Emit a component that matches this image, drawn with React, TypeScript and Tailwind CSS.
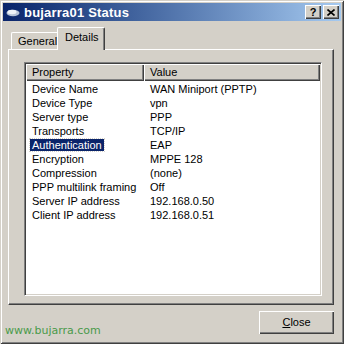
import React from "react";

const rows: [string, string][] = [
  ["Device Name", "WAN Miniport (PPTP)"],
  ["Device Type", "vpn"],
  ["Server type", "PPP"],
  ["Transports", "TCP/IP"],
  ["Authentication", "EAP"],
  ["Encryption", "MPPE 128"],
  ["Compression", "(none)"],
  ["PPP multilink framing", "Off"],
  ["Server IP address", "192.168.0.50"],
  ["Client IP address", "192.168.0.51"],
];

const raised =
  "bg-[#d4d0c8] shadow-[inset_1px_1px_0_#ffffff,inset_-1px_-1px_0_#404040,inset_-2px_-2px_0_#808080]";

export default function App() {
  return (
    <div
      className="w-[344px] h-[344px] bg-[#d4d0c8] p-[3px] flex flex-col shadow-[inset_1px_1px_0_#d4d0c8,inset_-1px_-1px_0_#404040,inset_2px_2px_0_#ffffff,inset_-2px_-2px_0_#808080] text-black"
      style={{ fontFamily: '"Liberation Sans", Arial, sans-serif' }}
    >
      {/* Title bar */}
      <div className="h-[18px] flex items-center bg-gradient-to-r from-[#0a246a] to-[#a6caf0] pl-[2px] pr-[2px]">
        <svg width="16" height="12" viewBox="0 0 16 12" className="shrink-0">
          <ellipse cx="8" cy="7" rx="6.5" ry="3.2" fill="#b8c4d8" />
          <ellipse cx="7" cy="6" rx="4.5" ry="2.2" fill="#eef2f8" />
        </svg>
        <span className="ml-[3px] text-white font-bold text-[13px] leading-none tracking-[0.2px]">
          bujarra01 Status
        </span>
        <div className="ml-auto flex gap-[2px]">
          <div
            className={`${raised} w-[16px] h-[14px] flex items-center justify-center text-[11px] font-bold leading-none`}
          >
            ?
          </div>
          <div
            className={`${raised} w-[16px] h-[14px] flex items-center justify-center`}
          >
            <svg width="8" height="7" viewBox="0 0 8 7">
              <path d="M0.5 0.5 L7.5 6.5 M7.5 0.5 L0.5 6.5" stroke="#000" strokeWidth="1.6" />
            </svg>
          </div>
        </div>
      </div>

      <div className="px-[5px] flex flex-col">
        {/* Tabs */}
        <div className="mt-[6px] h-[22px] flex items-end pl-[3px] relative z-10">
          <div className="h-[17px] w-[47px] border-l border-t border-white rounded-tl-[2px] shadow-[inset_-1px_0_0_#808080] flex items-center pl-[6px] text-[11px] leading-none">
            General
          </div>
          <div className="h-[23px] w-[48px] -mb-[1px] -ml-[1px] bg-[#d4d0c8] border-l border-t border-white border-r border-r-[#404040] rounded-t-[2px] shadow-[inset_-1px_0_0_#808080] flex items-start pt-[4px] pl-[7px] text-[11px] leading-none">
            Details
          </div>
        </div>

        {/* Panel */}
        <div className="w-[326px] h-[256px] border-l border-t border-white border-r border-b border-r-[#404040] border-b-[#404040] shadow-[inset_-1px_-1px_0_#808080] pt-[12px] pl-[15px]">
          <div className="w-[298px] h-[234px] bg-white border border-t-[#808080] border-l-[#808080] border-r-white border-b-white shadow-[inset_1px_1px_0_#404040,inset_-1px_-1px_0_#d4d0c8] p-[1px] flex flex-col">
            <div className="flex h-[17px] shrink-0">
              <div className={`${raised} w-[118px] flex items-center pl-[6px] text-[11px] leading-none`}>
                Property
              </div>
              <div className={`${raised} flex-1 flex items-center pl-[6px] text-[11px] leading-none`}>
                Value
              </div>
            </div>
            <div className="flex flex-col pt-[1px]">
              {rows.map(([k, v]) => (
                <div key={k} className="flex h-[14px] items-center text-[11px] leading-[13px]">
                  <div className="w-[118px] pl-[4px]">
                    <span
                      className={
                        k === "Authentication"
                          ? "px-[2px] bg-[#0a246a] text-white outline outline-1 outline-dotted outline-[#d4d0c8]"
                          : "px-[2px]"
                      }
                    >
                      {k}
                    </span>
                  </div>
                  <div className="pl-[6px]">{v}</div>
                </div>
              ))}
            </div>
          </div>
        </div>

        {/* Bottom */}
        <div className="mt-[6px] flex items-end justify-between pr-[2px]">
          <span
            className="-ml-[3px] mb-[-2px] text-[11px] leading-none text-[#4a9a4a]"
            style={{ fontFamily: '"DejaVu Sans", Verdana, sans-serif' }}
          >
            www.bujarra.com
          </span>
          <div
            className={`w-[75px] h-[23px] bg-[#d4d0c8] shadow-[inset_1px_1px_0_#ffffff,inset_-1px_-1px_0_#404040,inset_-2px_-2px_0_#808080] flex items-center justify-center text-[11px] leading-none`}
          >
            <span>
              <span className="underline">C</span>lose
            </span>
          </div>
        </div>
      </div>
    </div>
  );
}
